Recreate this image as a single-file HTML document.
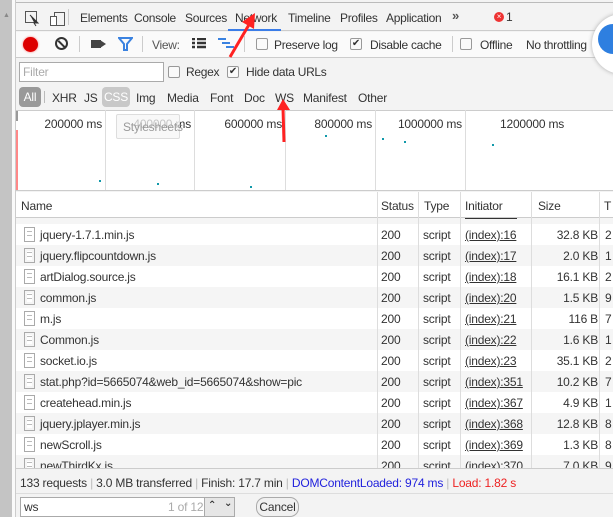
<!DOCTYPE html>
<html><head><meta charset="utf-8"><style>
*{margin:0;padding:0;box-sizing:border-box}
body{width:613px;height:517px;overflow:hidden;background:#f3f3f3;font-family:"Liberation Sans","DejaVu Sans",sans-serif;font-size:12px;color:#333;position:relative;letter-spacing:-0.2px}
.a{position:absolute;white-space:nowrap}
.t{font-size:12px;letter-spacing:-0.3px;top:11px}
.cb{position:absolute;width:12px;height:12px;border:1px solid #999;border-radius:2px;background:#fafafa}
.row{position:absolute;left:16px;width:597px;height:21px}
.row span{position:absolute;top:4px;white-space:nowrap}
.ic{position:absolute;left:8px;top:3px;width:11px;height:15px;border:1px solid #aaa;background:repeating-linear-gradient(#fff 0 3px,#bbb 3px 4px);background-clip:content-box;padding:2px}
.lab{position:absolute;top:117px;text-align:right;width:90px}
</style></head><body>
<div class="a" style="left:0;top:0;width:12px;height:517px;background:#c4c4c4"></div>
<div class="a" style="left:12px;top:0;width:3px;height:517px;background:#fafafa"></div>
<div class="a" style="left:3px;top:12px;font-size:7px;color:#888">▲</div>
<div class="a" style="left:15px;top:0;width:1px;height:517px;background:#ccc"></div>
<div class="a" style="left:16px;top:2px;width:597px;height:1px;background:#bbb"></div>
<div class="a" style="left:16px;top:3px;width:597px;height:28px;background:#f3f3f3;border-bottom:1px solid #ccc"></div>
<svg class="a" style="left:24px;top:9px" width="44" height="18"><rect x="1.5" y="2.5" width="11" height="11" fill="none" stroke="#555"/><path d="M6 6 L14 14 L10 14 L12 17" stroke="#333" fill="#333"/><rect x="30.5" y="3.5" width="10" height="13" fill="none" stroke="#555"/><rect x="26.5" y="7.5" width="6" height="9" fill="#fff" stroke="#555"/></svg>
<div class="a" style="left:68px;top:9px;width:1px;height:16px;background:#ccc"></div>
<div class="a t" style="left:80px">Elements</div>
<div class="a t" style="left:134px">Console</div>
<div class="a t" style="left:185px">Sources</div>
<div class="a t" style="left:235px">Network</div>
<div class="a" style="left:228px;top:29px;width:53px;height:2px;background:#3b7de8"></div>
<div class="a t" style="left:288px">Timeline</div>
<div class="a t" style="left:340px">Profiles</div>
<div class="a t" style="left:386px">Application</div>
<div class="a" style="left:452px;top:8px;font-size:13px;font-weight:bold;color:#555">»</div>
<div class="a" style="left:494px;top:12px;width:10px;height:10px;border-radius:50%;background:#e33;color:#fff;font-size:8px;line-height:10px;text-align:center">×</div>
<div class="a" style="left:506px;top:10px;font-size:12px">1</div>
<div class="a" style="left:16px;top:32px;width:597px;height:26px;background:#fafafa;border-bottom:1px solid #ccc"></div>
<div class="a" style="left:23px;top:37px;width:15px;height:15px;border-radius:50%;background:#d00;box-shadow:0 0 2px #f66"></div>
<div class="a" style="left:55px;top:37px;width:13px;height:13px;border-radius:50%;border:2px solid #333"></div>
<div class="a" style="left:57px;top:43px;width:9px;height:2px;background:#333;transform:rotate(45deg)"></div>
<div class="a" style="left:79px;top:36px;width:1px;height:16px;background:#ccc"></div>
<div class="a" style="left:91px;top:40px;width:10px;height:8px;background:#444"></div>
<div class="a" style="left:100px;top:40px;border-left:6px solid #444;border-top:4px solid transparent;border-bottom:4px solid transparent"></div>
<svg class="a" style="left:118px;top:37px" width="15" height="14"><path d="M1 1 H14 L9 7 V13 H6 V7 Z" fill="none" stroke="#3a82e0" stroke-width="2"/></svg>
<div class="a" style="left:142px;top:36px;width:1px;height:16px;background:#ccc"></div>
<div class="a t" style="left:152px;top:38px;color:#555">View:</div>
<svg class="a" style="left:192px;top:38px" width="14" height="12"><path d="M0 1h3M5 1h9M0 5h3M5 5h9M0 9h3M5 9h9" stroke="#333" stroke-width="2.5"/></svg>
<svg class="a" style="left:218px;top:38px" width="16" height="13"><path d="M0 1h8M4 5h8M8 9h8" stroke="#3a82e0" stroke-width="2"/></svg>
<div class="a" style="left:244px;top:36px;width:1px;height:16px;background:#ccc"></div>
<div class="cb" style="left:256px;top:38px"></div>
<div class="a t" style="left:274px;top:38px">Preserve log</div>
<div class="cb" style="left:350px;top:38px;font-size:10px;line-height:10px;text-align:center">✔</div>
<div class="a t" style="left:370px;top:38px">Disable cache</div>
<div class="a" style="left:452px;top:36px;width:1px;height:16px;background:#ccc"></div>
<div class="cb" style="left:460px;top:38px"></div>
<div class="a t" style="left:480px;top:38px">Offline</div>
<div class="a t" style="left:526px;top:38px">No throttling</div>
<div class="a" style="left:19px;top:62px;width:145px;height:20px;border:1px solid #aaa;background:#fff;padding:2px 3px;color:#aaa;font-size:12px">Filter</div>
<div class="cb" style="left:168px;top:66px"></div>
<div class="a t" style="left:186px;top:65px">Regex</div>
<div class="cb" style="left:227px;top:66px;font-size:10px;line-height:10px;text-align:center">✔</div>
<div class="a t" style="left:246px;top:65px">Hide data URLs</div>
<div class="a" style="left:19px;top:87px;width:22px;height:20px;background:#999;border-radius:4px;color:#fff;font-size:12px;text-align:center;line-height:20px">All</div>
<div class="a" style="left:44px;top:91px;width:1px;height:12px;background:#bbb"></div>
<div class="a" style="left:52px;top:91px">XHR</div>
<div class="a" style="left:84px;top:91px">JS</div>
<div class="a" style="left:102px;top:87px;width:28px;height:20px;background:#c8c8c8;border-radius:4px;color:#fff;text-align:center;line-height:20px">CSS</div>
<div class="a" style="left:136px;top:91px">Img</div>
<div class="a" style="left:167px;top:91px">Media</div>
<div class="a" style="left:210px;top:91px">Font</div>
<div class="a" style="left:244px;top:91px">Doc</div>
<div class="a" style="left:275px;top:91px">WS</div>
<div class="a" style="left:303px;top:91px">Manifest</div>
<div class="a" style="left:358px;top:91px">Other</div>
<div class="a" style="left:16px;top:110px;width:597px;height:81px;background:#fff;border-top:1px solid #ccc;border-bottom:1px solid #ccc"></div>
<div class="a" style="left:16px;top:130px;width:2px;height:60px;background:#f88"></div>
<div class="a" style="left:16px;top:111px;width:2px;height:10px;background:#999"></div>
<div class="a" style="left:105px;top:110px;width:1px;height:80px;background:#ddd"></div>
<div class="a" style="left:194px;top:110px;width:1px;height:80px;background:#ddd"></div>
<div class="a" style="left:285px;top:110px;width:1px;height:80px;background:#ddd"></div>
<div class="a" style="left:375px;top:110px;width:1px;height:80px;background:#ddd"></div>
<div class="a" style="left:465px;top:110px;width:1px;height:80px;background:#ddd"></div>
<div class="lab" style="left:12px">200000 ms</div>
<div class="lab" style="left:101px">400000 ms</div>
<div class="lab" style="left:192px">600000 ms</div>
<div class="lab" style="left:282px">800000 ms</div>
<div class="lab" style="left:372px">1000000 ms</div>
<div class="a" style="left:500px;top:117px">1200000 ms</div>
<div class="a" style="left:116px;top:114px;width:64px;height:25px;background:rgba(245,245,245,0.75);border:1px solid #ddd;border-radius:2px;color:#999;padding:5px 6px">Stylesheets</div>
<div class="a" style="left:99px;top:180px;width:2px;height:2px;background:#19a"></div>
<div class="a" style="left:157px;top:183px;width:2px;height:2px;background:#19a"></div>
<div class="a" style="left:250px;top:186px;width:2px;height:2px;background:#19a"></div>
<div class="a" style="left:325px;top:135px;width:2px;height:2px;background:#19a"></div>
<div class="a" style="left:382px;top:138px;width:2px;height:2px;background:#19a"></div>
<div class="a" style="left:404px;top:141px;width:2px;height:2px;background:#19a"></div>
<div class="a" style="left:492px;top:144px;width:2px;height:2px;background:#19a"></div>
<div class="a" style="left:16px;top:192px;width:597px;height:26px;background:#fff;border-bottom:1px solid #ccc"></div>
<div class="a" style="left:21px;top:199px">Name</div>
<div class="a" style="left:381px;top:199px">Status</div>
<div class="a" style="left:424px;top:199px">Type</div>
<div class="a" style="left:465px;top:199px">Initiator</div>
<div class="a" style="left:538px;top:199px">Size</div>
<div class="a" style="left:604px;top:199px">T</div>
<div class="a" style="left:16px;top:218px;width:597px;height:6px;background:#f5f5f5"></div>
<div class="a" style="left:465px;top:218px;width:52px;height:1px;background:#333"></div>
<div id="rows"></div>
<div class="a" style="left:377px;top:192px;width:1px;height:276px;background:#ddd"></div>
<div class="a" style="left:418px;top:192px;width:1px;height:276px;background:#ddd"></div>
<div class="a" style="left:460px;top:192px;width:1px;height:276px;background:#ddd"></div>
<div class="a" style="left:531px;top:192px;width:1px;height:276px;background:#ddd"></div>
<div class="a" style="left:599px;top:192px;width:1px;height:276px;background:#ddd"></div>
<script>
var d=[["jquery-1.7.1.min.js",16,"32.8 KB",2],["jquery.flipcountdown.js",17,"2.0 KB",1],["artDialog.source.js",18,"16.1 KB",2],["common.js",20,"1.5 KB",9],["m.js",21,"116 B",7],["Common.js",22,"1.6 KB",1],["socket.io.js",23,"35.1 KB",2],["stat.php?id=5665074&amp;web_id=5665074&amp;show=pic",351,"10.2 KB",7],["createhead.min.js",367,"4.9 KB",1],["jquery.jplayer.min.js",368,"12.8 KB",8],["newScroll.js",369,"1.3 KB",8],["newThirdKx.js",370,"7.0 KB",9]];
var h="";d.forEach(function(r,i){var y=224+i*21;if(y>468)return;var hh=Math.min(21,468-y);
h+='<div class="row" style="top:'+y+'px;height:'+hh+'px;overflow:hidden;background:'+(i%2?'#f5f5f5':'#fff')+'"><div class="ic"></div><span style="left:24px">'+r[0]+'</span><span style="left:365px">200</span><span style="left:407px">script</span><span style="left:449px;text-decoration:underline">(index):'+r[1]+'</span><span style="right:15px">'+r[2]+'</span><span style="left:589px">'+r[3]+'</span></div>';});
document.getElementById("rows").innerHTML=h;
</script>
<div class="a" style="left:16px;top:468px;width:597px;height:1px;background:#ccc"></div>
<div class="a" style="left:20px;top:476px">133 requests <span style="color:#bbb">|</span> 3.0 MB transferred <span style="color:#bbb">|</span> Finish: 17.7 min <span style="color:#bbb">|</span> <span style="color:#22d">DOMContentLoaded: 974 ms</span> <span style="color:#bbb">|</span> <span style="color:#e22">Load: 1.82 s</span></div>
<div class="a" style="left:16px;top:493px;width:597px;height:1px;background:#ddd"></div>
<div class="a" style="left:20px;top:497px;width:215px;height:20px;border:1px solid #aaa;background:#fff"></div>
<div class="a" style="left:24px;top:500px">ws</div>
<div class="a" style="left:168px;top:500px;color:#aaa">1 of 12</div>
<div class="a" style="left:204px;top:498px;width:30px;height:18px;background:#e6e6e6;border-left:1px solid #aaa"></div>
<div class="a" style="left:208px;top:500px;font-size:10px;font-weight:bold">⌃</div>
<div class="a" style="left:224px;top:498px;font-size:10px;font-weight:bold">⌄</div>
<div class="a" style="left:256px;top:497px;width:43px;height:20px;border:1px solid #aaa;border-radius:9px;background:#f0f0f0;text-align:center;line-height:18px">Cancel</div>
<div class="a" style="left:592px;top:14px;width:60px;height:60px;border-radius:50%;background:#fff;box-shadow:0 0 4px #aaa;overflow:hidden">
<div style="position:absolute;left:6px;top:10px;width:30px;height:30px;border-radius:50%;background:#2e7fe0"></div></div>
<svg class="a" style="left:0;top:0" width="613" height="517">
<path d="M230 57 L250 23" stroke="#f22" stroke-width="3"/><path d="M242 22 L255 13 L254 29 Z" fill="#f22"/>
<path d="M284 142 L283 108" stroke="#f22" stroke-width="3"/><path d="M277 110 L283 99 L290 110 Z" fill="#f22"/>
</svg>
</body></html>
